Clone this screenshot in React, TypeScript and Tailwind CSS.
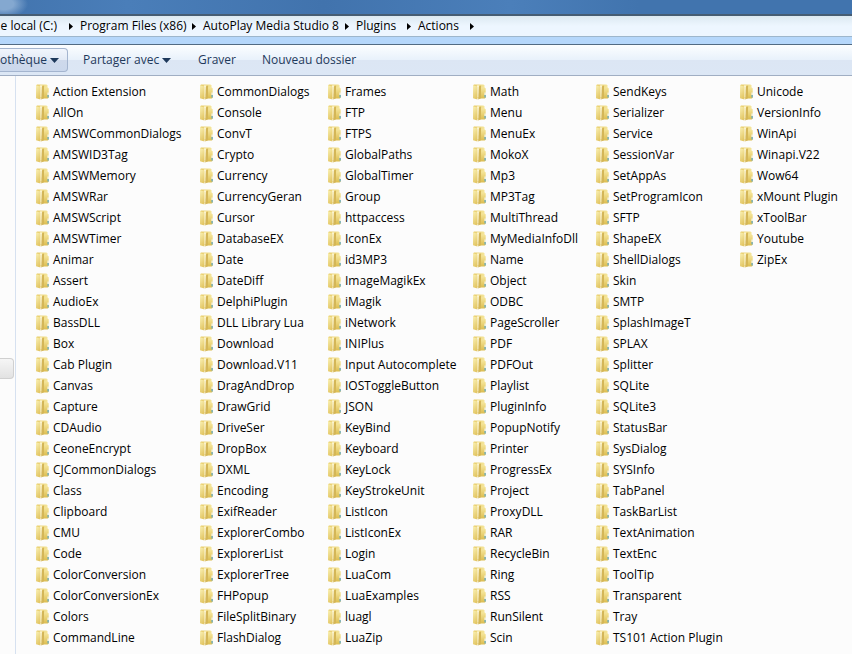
const crumbs = [
  { label: 'e local (C:)', box: 'w-[57px] justify-end' },
  { label: 'Program Files (x86)', box: 'w-[100px]' },
  { label: 'AutoPlay Media Studio 8', box: 'w-[130px]' },
  { label: 'Plugins', box: 'w-[39px]' },
  { label: 'Actions', box: 'w-[40px]' },
];

const columns = [
  {
    width: 'w-[164px]',
    names: ['Action Extension', 'AllOn', 'AMSWCommonDialogs', 'AMSWID3Tag', 'AMSWMemory', 'AMSWRar', 'AMSWScript', 'AMSWTimer', 'Animar', 'Assert', 'AudioEx', 'BassDLL', 'Box', 'Cab Plugin', 'Canvas', 'Capture', 'CDAudio', 'CeoneEncrypt', 'CJCommonDialogs', 'Class', 'Clipboard', 'CMU', 'Code', 'ColorConversion', 'ColorConversionEx', 'Colors', 'CommandLine'],
  },
  {
    width: 'w-[128px]',
    names: ['CommonDialogs', 'Console', 'ConvT', 'Crypto', 'Currency', 'CurrencyGeran', 'Cursor', 'DatabaseEX', 'Date', 'DateDiff', 'DelphiPlugin', 'DLL Library Lua', 'Download', 'Download.V11', 'DragAndDrop', 'DrawGrid', 'DriveSer', 'DropBox', 'DXML', 'Encoding', 'ExifReader', 'ExplorerCombo', 'ExplorerList', 'ExplorerTree', 'FHPopup', 'FileSplitBinary', 'FlashDialog'],
  },
  {
    width: 'w-[145px]',
    names: ['Frames', 'FTP', 'FTPS', 'GlobalPaths', 'GlobalTimer', 'Group', 'httpaccess', 'IconEx', 'id3MP3', 'ImageMagikEx', 'iMagik', 'iNetwork', 'INIPlus', 'Input Autocomplete', 'IOSToggleButton', 'JSON', 'KeyBind', 'Keyboard', 'KeyLock', 'KeyStrokeUnit', 'ListIcon', 'ListIconEx', 'Login', 'LuaCom', 'LuaExamples', 'luagl', 'LuaZip'],
  },
  {
    width: 'w-[123px]',
    names: ['Math', 'Menu', 'MenuEx', 'MokoX', 'Mp3', 'MP3Tag', 'MultiThread', 'MyMediaInfoDll', 'Name', 'Object', 'ODBC', 'PageScroller', 'PDF', 'PDFOut', 'Playlist', 'PluginInfo', 'PopupNotify', 'Printer', 'ProgressEx', 'Project', 'ProxyDLL', 'RAR', 'RecycleBin', 'Ring', 'RSS', 'RunSilent', 'Scin'],
  },
  {
    width: 'w-[144px]',
    names: ['SendKeys', 'Serializer', 'Service', 'SessionVar', 'SetAppAs', 'SetProgramIcon', 'SFTP', 'ShapeEX', 'ShellDialogs', 'Skin', 'SMTP', 'SplashImageT', 'SPLAX', 'Splitter', 'SQLite', 'SQLite3', 'StatusBar', 'SysDialog', 'SYSInfo', 'TabPanel', 'TaskBarList', 'TextAnimation', 'TextEnc', 'ToolTip', 'Transparent', 'Tray', 'TS101 Action Plugin'],
  },
  {
    width: 'w-[112px]',
    names: ['Unicode', 'VersionInfo', 'WinApi', 'Winapi.V22', 'Wow64', 'xMount Plugin', 'xToolBar', 'Youtube', 'ZipEx'],
  },
];

function FolderIcon() {
  return (
    <svg className="h-4 w-4 shrink-0" viewBox="0 0 16 16" aria-hidden="true">
      <path d="M1 1.500 2 .5h9.500l1 1V14H1z" fill="url(#folder-back)" />
      <path d="M7 3.500h5.800l.9 1v9.200l-1 .8H7z" fill="url(#folder-side)" />
      <path d="M5 1.500h2v12H5z" fill="#fffbe0" />
      <path d="M1 1.200 5.500 2.500v13L1 14.200z" fill="url(#folder-front)" />
      <path d="M6.800 2.500 9 1.500v12.800l-2.800 1.200z" fill="#d4b657" />
      <path d="M12.500 8.500h1.200v2.500h-1.200z" fill="#f4fafc" />
      <path d="M12.500 11h1.200v2.500h-1.200z" fill="#5ba8cc" />
    </svg>
  );
}

function Caret() {
  return (
    <svg className="h-[5px] w-[9px] shrink-0" viewBox="0 0 9 5" aria-hidden="true">
      <path d="M0 0h9L4.500 5z" fill="#1e395b" />
    </svg>
  );
}

export default function App() {
  return (
    <div className="flex min-h-screen flex-col overflow-hidden bg-[#fcfcfc] font-['Open_Sans','Noto_Sans',sans-serif] text-xs text-black">
      <svg className="absolute h-0 w-0" aria-hidden="true">
        <defs>
          <linearGradient id="folder-back">
            <stop stopColor="#e6ca66" />
            <stop offset="1" stopColor="#f5e69c" />
          </linearGradient>
          <linearGradient id="folder-side" x2="0" y2="1">
            <stop stopColor="#f5e59a" />
            <stop offset="1" stopColor="#dcbd4f" />
          </linearGradient>
          <linearGradient id="folder-front" x2="0.400" y2="1">
            <stop stopColor="#faf1b5" />
            <stop offset="1" stopColor="#e3c766" />
          </linearGradient>
        </defs>
      </svg>

      <header>
        <div className="h-[14px] bg-[radial-gradient(ellipse_24px_14px_at_4px_4px,#84a8d0_40%,transparent),linear-gradient(90deg,#4274ae,#4a7eb9_15%,#4173ad_38%,#4b7fba_60%,#4174ae_75%)]" />
        <nav
          aria-label="Address"
          className="flex h-[23px] items-center border-t-2 border-b border-t-[#465d73] border-b-[#9db6cc] bg-linear-to-b from-[#dce9f1] to-[#edf6ff] to-50%"
        >
          {crumbs.map((crumb) => (
            <div key={crumb.label} className="flex shrink-0 items-center">
              <button className={`flex whitespace-nowrap ${crumb.box}`}>{crumb.label}</button>
              <span className="flex w-[23px] justify-center pl-1">
                <svg className="h-[7px] w-1" viewBox="0 0 4 7" aria-hidden="true">
                  <path d="M0 0 4 3.500 0 7z" />
                </svg>
              </span>
            </div>
          ))}
        </nav>
        <div className="h-[8px] border-b border-[#526b83] bg-[#b5d7fb]" />
        <div
          role="toolbar"
          aria-label="Commands"
          className="flex h-[31px] items-center border-b border-[#a0aec3] bg-[linear-gradient(#fcfeff,#e8f1fb_50%,#dce6f4_50%,#dce7f5)] text-[#1e395b]"
        >
          <button className="flex h-[24px] w-[68px] shrink-0 items-center justify-end gap-[3px] rounded-r-sm border border-l-0 border-[#a4b5cf] bg-[linear-gradient(#f2f6fc,#e2eaf6_50%,#ced9eb_50%,#cbd8ec)] pr-2">
            othèque
            <Caret />
          </button>
          <button className="ml-[15px] flex w-[115px] shrink-0 items-center gap-[3px] whitespace-nowrap">
            Partager avec
            <Caret />
          </button>
          <button className="w-[64px] shrink-0 text-left">Graver</button>
          <button className="shrink-0 whitespace-nowrap">Nouveau dossier</button>
        </div>
      </header>

      <div className="flex grow">
        <aside className="flex w-4 shrink-0 flex-col border-r border-[#d6e1f0]">
          <div className="mt-[282px] h-[21px] w-[14px] rounded-r-sm border border-l-0 border-[#d0d0d0] bg-linear-to-b from-[#f6f6f6] to-[#e2e2e2]" />
        </aside>
        <main className="flex pt-[5px] pl-[19px]">
          {columns.map((column) => (
            <ul key={column.names[0]} className={`shrink-0 ${column.width}`}>
              {column.names.map((name) => (
                <li key={name} className="flex h-[21px] items-center gap-[2px] whitespace-nowrap">
                  <FolderIcon />
                  {name}
                </li>
              ))}
            </ul>
          ))}
        </main>
      </div>
    </div>
  );
}
